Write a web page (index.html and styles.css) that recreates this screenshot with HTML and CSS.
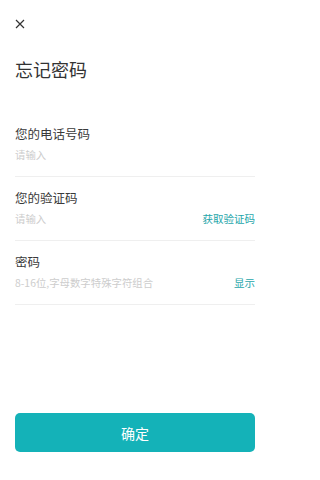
FILE: index.html
```html
<!DOCTYPE html>
<html lang="zh">
<head>
<meta charset="utf-8">
<link rel="stylesheet" href="styles.css">
</head>
<body>
<div class="page">
  <div class="close">
    <svg width="10" height="10" viewBox="0 0 10 10"><path d="M1 1 L9 9 M9 1 L1 9" stroke="#333" stroke-width="1.2" fill="none"/></svg>
  </div>
  <h1 class="title">忘记密码</h1>
  <div class="form">
    <div class="row">
      <div class="label">您的电话号码</div>
      <div class="field"><span class="ph">请输入</span></div>
    </div>
    <div class="row">
      <div class="label">您的验证码</div>
      <div class="field"><span class="ph">请输入</span><span class="link">获取验证码</span></div>
    </div>
    <div class="row">
      <div class="label">密码</div>
      <div class="field"><span class="ph">8-16位,字母数字特殊字符组合</span><span class="link">显示</span></div>
    </div>
  </div>
  <button class="submit">确定</button>
</div>
</body>
</html>
```
FILE: styles.css
```css
html, body {
  margin: 0;
  padding: 0;
  background: #fff;
}
body {
  font-family: "Noto Sans CJK SC", "Noto Sans", sans-serif;
  color: #333;
}
.page {
  box-sizing: border-box;
  width: 270px;
  height: 480px;
  padding: 0 15px 28px;
  display: flex;
  flex-direction: column;
}
.close {
  margin-top: 19px;
  height: 10px;
  display: flex;
}
.close svg {
  display: block;
}
.title {
  margin: 28px 0 0;
  font-size: 18px;
  line-height: 24px;
  font-weight: 400;
  color: #333;
}
.form {
  margin-top: 32px;
}
.row {
  padding: 12px 0 14px;
  border-bottom: 1px solid #efefef;
}
.label {
  font-size: 12.5px;
  line-height: 18px;
  color: #3a3a3a;
}
.field {
  margin-top: 5px;
  height: 14px;
  display: flex;
  justify-content: space-between;
  align-items: center;
}
.ph {
  font-size: 10.4px;
  line-height: 14px;
  color: #cdcdcd;
}
.link {
  font-size: 10.5px;
  line-height: 14px;
  color: #1ea6aa;
}
.submit {
  margin-top: auto;
  height: 39px;
  border: none;
  border-radius: 5px;
  background: #14b2b8;
  color: #fff;
  font-family: "Noto Sans CJK SC", "Noto Sans", sans-serif;
  font-size: 14px;
  padding: 0;
}
```
